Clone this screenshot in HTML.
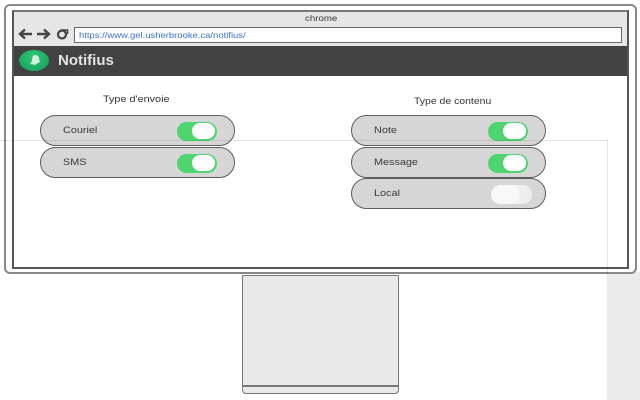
<!DOCTYPE html>
<html><head><meta charset="utf-8"><style>
html,body{margin:0;padding:0;background:#fff}
body{width:640px;height:400px;position:relative;overflow:hidden;font-family:"Liberation Sans",sans-serif;color:#333}
div{position:absolute;box-sizing:border-box}
.t{transform-origin:0 0;transform:scaleX(1.14);white-space:nowrap}
.pill{width:195px;height:31px;background:#d6d6d6;border:1.6px solid #5c5c5c;border-radius:16px;filter:blur(.35px)}
.pill span{position:absolute;left:22px;top:8.500px;font-size:9.5px;color:#3a3a3a;transform-origin:0 0;transform:scaleX(1.14)}
.tg{left:135.500px;top:5.500px;width:40px;height:19px;border-radius:10px;background:#4fd56f}
.tg:after{content:"";position:absolute;right:2px;top:1.500px;width:23px;height:16px;border-radius:9px;background:#fff}
.off{background:#eee;left:138.500px;width:41px}
.off:after{left:0;right:auto;width:29px;height:19px;top:0;border-radius:10px;background:#f8f8f8}
.h{font-size:9.5px;color:#333;white-space:nowrap;transform-origin:0 0;transform:scaleX(1.14)}
</style></head><body>
<div style="left:607px;top:272px;width:33px;height:128px;background:#ebebeb"></div>
<div style="left:4px;top:4px;width:633px;height:270px;background:#fff;border:2px solid #888;border-radius:6px"></div>
<div style="left:12px;top:10px;width:617px;height:259px;background:#fff;border:2px solid #555;border-top-color:#777"></div>
<div style="left:14px;top:12px;width:613px;height:34px;background:#e6e6e6"></div>
<div class="h" style="left:305px;top:13px;font-size:8.5px">chrome</div>
<svg style="position:absolute;left:17px;top:27px" width="54" height="14" viewBox="0 0 54 14" fill="none" stroke="#444" stroke-width="2.4">
<path d="M15 7H3M8 2.500L3 7l5 4.500"/><path d="M20 7h11M27 2.500L32 7l-5 4.500"/><circle cx="45" cy="7.500" r="4" stroke-width="2.200"/><path d="M44 3h6.500V7" stroke-width="1.600"/>
</svg>
<div style="left:74px;top:27px;width:548px;height:16px;background:#fff;border:1px solid #666"></div>
<div class="t" style="left:79px;top:30px;font-size:8.300px;color:#3f6fd0">https://www.gel.usherbrooke.ca/notifius/</div>
<div style="left:14px;top:46px;width:613px;height:30px;background:#424242"></div>
<div style="left:19px;top:50px;width:30px;height:21px;border-radius:50%;background:radial-gradient(ellipse at 50% 30%,#2fc878,#159c58)"></div>
<svg style="position:absolute;left:26px;top:53px" width="16" height="15" viewBox="0 0 16 15"><path d="M9 2c3 0 4 2 4 4l1 3-4 2-1 1.500-1-1-4-.5 2-3C6 4 7 2 9 2z" fill="#d8eee0"/></svg>
<div style="left:58px;top:52px;font-size:15px;font-weight:bold;color:#e4e4e4;white-space:nowrap">Notifius</div>
<div class="h" style="left:103px;top:94px">Type d'envoie</div>
<div class="h" style="left:414px;top:96px;transform:scaleX(1.1)">Type de contenu</div>
<div class="pill" style="left:40px;top:115px"><span>Couriel</span><div class="tg"></div></div>
<div class="pill" style="left:40px;top:147px"><span>SMS</span><div class="tg"></div></div>
<div class="pill" style="left:351px;top:115px"><span>Note</span><div class="tg"></div></div>
<div class="pill" style="left:351px;top:147px"><span>Message</span><div class="tg"></div></div>
<div class="pill" style="left:351px;top:178px"><span>Local</span><div class="tg off"></div></div>
<div style="left:0;top:140px;width:608px;height:1px;background:rgba(0,0,0,.1)"></div>
<div style="left:607px;top:140px;width:1px;height:135px;background:rgba(0,0,0,.1)"></div>
<div style="left:242px;top:275px;width:157px;height:119px;background:#e9e9e9;border:1px solid #777;border-radius:1px 1px 4px 4px"></div>
<div style="left:242px;top:385px;width:157px;height:2px;background:#777"></div>
</body></html>
